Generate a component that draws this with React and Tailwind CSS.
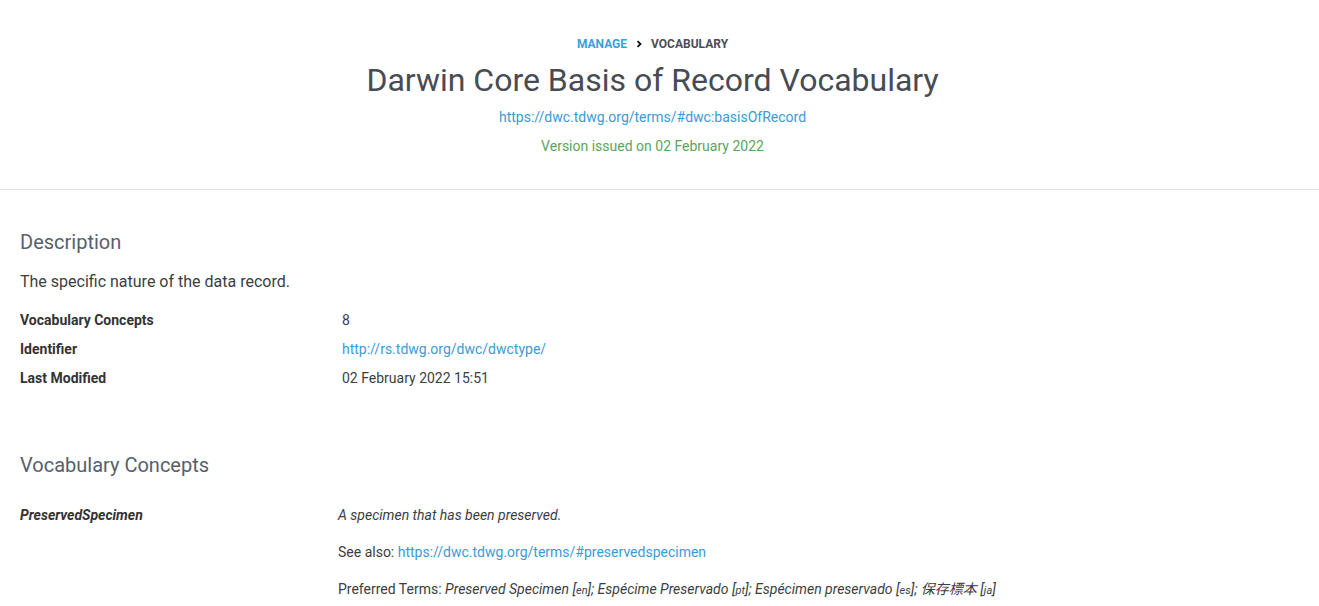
import React from "react";

const details = [
  { label: "Vocabulary Concepts", value: "8" },
  { label: "Identifier", value: "http://rs.tdwg.org/dwc/dwctype/", link: true },
  { label: "Last Modified", value: "02 February 2022 15:51" },
];

const terms = [
  { text: "Preserved Specimen", lang: "en" },
  { text: "Espécime Preservado", lang: "pt" },
  { text: "Espécimen preservado", lang: "es" },
  { text: "保存標本", lang: "ja" },
];

const Chevron = () => (
  <svg width="8" height="8" viewBox="0 0 8 8" className="mx-2">
    <path d="M2.5 1.2 L5.5 4 L2.5 6.8" fill="none" stroke="#111" strokeWidth="1.8" />
  </svg>
);

export default function App() {
  return (
    <div
      className="min-h-screen bg-white text-[#3b3e42]"
      style={{ fontFamily: 'Roboto, "Noto Sans CJK JP", sans-serif' }}
    >
      {/* header */}
      <header className="flex flex-col items-center pt-[36px] pb-[33px] pr-[14px] border-b border-[#e2e2e2]">
        <div className="flex items-center h-4 text-[12px] font-bold uppercase leading-4">
          <span className="text-[#3d9fd6]">Manage</span>
          <Chevron />
          <span className="text-[#4a4f57]">Vocabulary</span>
        </div>
        <h1 className="mt-[9px] text-[32px] leading-[38px] text-[#474c54]">
          Darwin Core Basis of Record Vocabulary
        </h1>
        <a className="mt-[8px] text-[14px] leading-5 text-[#3a9bd5]">
          https://dwc.tdwg.org/terms/#dwc:basisOfRecord
        </a>
        <div className="mt-[9px] text-[14px] leading-5 text-[#5ba55b]">
          Version issued on 02 February 2022
        </div>
      </header>

      <main className="px-5">
        <h2 className="mt-[38px] text-[20px] leading-7 text-[#56606c]">Description</h2>
        <p className="mt-[14px] text-[16px] leading-6 text-[#3b3e42]">
          The specific nature of the data record.
        </p>
        <div className="mt-[12px]">
          {details.map((d) => (
            <div key={d.label} className="flex items-center h-[29px] text-[14px]">
              <div className="w-[322px] font-bold text-[#333]">{d.label}</div>
              <div className={d.link ? "text-[#3a9bd5]" : "text-[#3b3e42]"}>{d.value}</div>
            </div>
          ))}
        </div>

        <h2 className="mt-[58px] text-[20px] leading-7 text-[#56606c]">Vocabulary Concepts</h2>
        <div className="mt-[26px] flex text-[14px] leading-5">
          <div className="w-[318px] font-bold italic text-[#333]">PreservedSpecimen</div>
          <div className="flex flex-col gap-[17px]">
            <div className="italic">A specimen that has been preserved.</div>
            <div>
              See also: <a className="text-[#3a9bd5]">https://dwc.tdwg.org/terms/#preservedspecimen</a>
            </div>
            <div>
              Preferred Terms:{" "}
              {terms.map((t, i) => (
                <span key={t.lang} className="italic">
                  {t.text} [<span className="text-[11px]">{t.lang}</span>]
                  {i < terms.length - 1 ? "; " : ""}
                </span>
              ))}
            </div>
          </div>
        </div>
      </main>
    </div>
  );
}
